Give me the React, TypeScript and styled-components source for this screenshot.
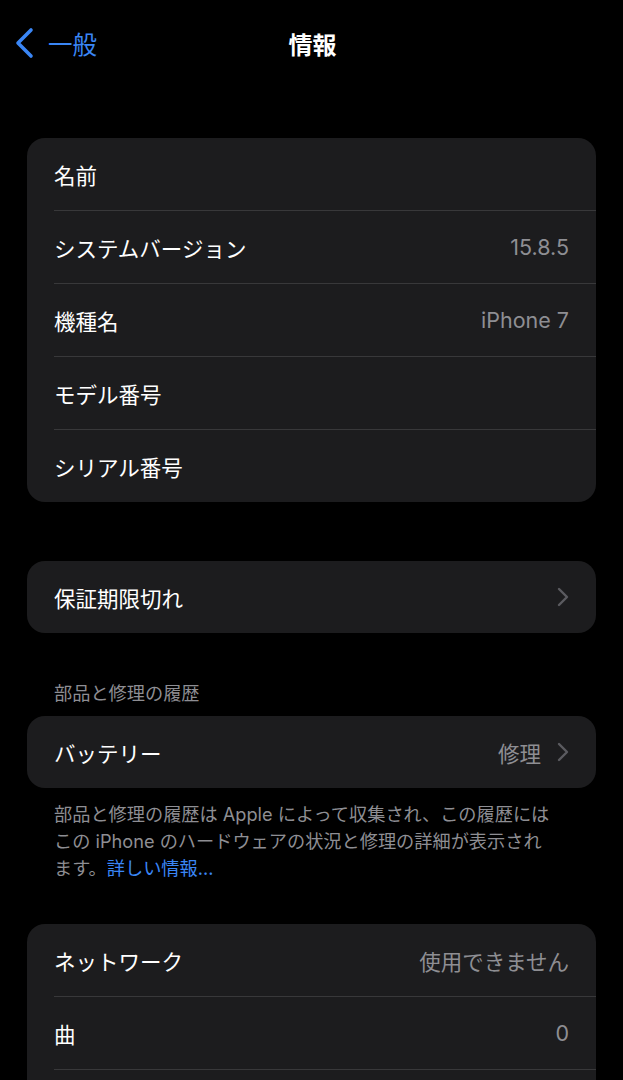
import React from "react";
import styled, { createGlobalStyle } from "styled-components";

const Global = createGlobalStyle`
  html, body { margin: 0; padding: 0; background: #000; }
  body { font-family: "Inter", "Noto Sans CJK JP", sans-serif; color: #fff; -webkit-font-smoothing: antialiased; }
`;

const Page = styled.div`
  width: 623px;
  height: 1080px;
  background: #000;
  overflow: hidden;
`;

const Nav = styled.div`
  position: relative;
  height: 86px;
  display: flex;
  align-items: center;
  justify-content: center;
`;

const Back = styled.div`
  position: absolute;
  left: 14px;
  top: 0;
  height: 86px;
  display: flex;
  align-items: center;
  gap: 14px;
  color: #3a86f5;
  font-size: 24.5px;
`;

const Title = styled.div`
  font-size: 24px;
  font-weight: 700;
  color: #fff;
  padding-left: 2px;
`;

const Content = styled.div`
  padding: 52px 27px 0;
  display: flex;
  flex-direction: column;
`;

const Card = styled.div<{ $mt?: number }>`
  background: #1c1c1e;
  border-radius: 18px;
  margin-top: ${(p) => p.$mt ?? 0}px;
  overflow: hidden;
`;

const Row = styled.div<{ $last?: boolean }>`
  height: 72px;
  margin-left: 27px;
  padding-right: 27px;
  display: flex;
  align-items: center;
  justify-content: space-between;
  border-bottom: ${(p) => (p.$last ? "none" : "1px solid #38383a")};
  font-size: 21.5px;
`;

const Label = styled.span`
  color: #fff;
`;

const Value = styled.span`
  color: #8e8e93;
  display: flex;
  align-items: center;
  gap: 16px;
`;

const SectionHeader = styled.div`
  margin-top: 49px;
  padding-left: 27px;
  font-size: 18.2px;
  line-height: 22px;
  color: #8e8e93;
  margin-bottom: 12px;
`;

const Footer = styled.div`
  margin-top: 13px;
  padding: 0 20px 0 27px;
  font-size: 18.2px;
  line-height: 27px;
  color: #8e8e93;
  white-space: nowrap;
`;

const Link = styled.span`
  color: #3a86f5;
`;

const Chevron = () => (
  <svg width="12" height="20" viewBox="0 0 12 20">
    <polyline points="2,2 10,10 2,18" fill="none" stroke="#5b5b60" strokeWidth="2.4" strokeLinecap="round" strokeLinejoin="round" />
  </svg>
);

const BackChevron = () => (
  <svg width="20" height="32" viewBox="0 0 20 32">
    <polyline points="17,3 4,16 17,29" fill="none" stroke="#3a86f5" strokeWidth="3.6" strokeLinecap="round" strokeLinejoin="round" />
  </svg>
);

export default function App() {
  return (
    <Page>
      <Global />
      <Nav>
        <Back>
          <BackChevron />
          <span>一般</span>
        </Back>
        <Title>情報</Title>
      </Nav>
      <Content>
        <Card>
          <Row><Label>名前</Label><Value></Value></Row>
          <Row><Label>システムバージョン</Label><Value>15.8.5</Value></Row>
          <Row><Label>機種名</Label><Value>iPhone 7</Value></Row>
          <Row><Label>モデル番号</Label><Value></Value></Row>
          <Row $last><Label>シリアル番号</Label><Value></Value></Row>
        </Card>
        <Card $mt={59}>
          <Row $last><Label>保証期限切れ</Label><Value><Chevron /></Value></Row>
        </Card>
        <SectionHeader>部品と修理の履歴</SectionHeader>
        <Card>
          <Row $last><Label>バッテリー</Label><Value>修理<Chevron /></Value></Row>
        </Card>
        <Footer>
          部品と修理の履歴は Apple によって収集され、この履歴には<br />
          この iPhone のハードウェアの状況と修理の詳細が表示され<br />
          ます。<Link>詳しい情報...</Link>
        </Footer>
        <Card $mt={42}>
          <Row><Label>ネットワーク</Label><Value>使用できません</Value></Row>
          <Row><Label>曲</Label><Value>0</Value></Row>
          <Row $last><Label></Label><Value></Value></Row>
        </Card>
      </Content>
    </Page>
  );
}
